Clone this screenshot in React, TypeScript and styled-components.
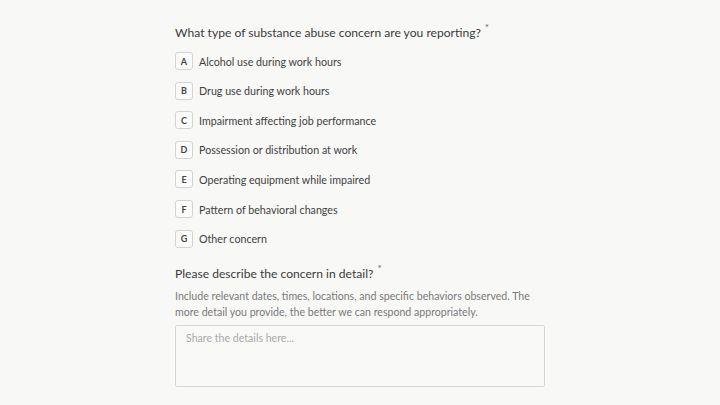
import React from "react";
import styled, { createGlobalStyle } from "styled-components";

const Global = createGlobalStyle`
  html, body { margin: 0; padding: 0; background: #f8f8f7; }
  body { font-family: Lato, "Noto Sans", sans-serif; -webkit-font-smoothing: antialiased; }
  #root { height: 405px; overflow: hidden; }
`;

const Page = styled.div`
  display: flex;
  justify-content: center;
  padding-top: 18px;
  height: 405px;
  box-sizing: border-box;
  overflow: hidden;
`;

const Column = styled.div`
  width: 370px;
  display: flex;
  flex-direction: column;
`;

const Question = styled.section<{ $gap?: number }>`
  display: flex;
  flex-direction: column;
  margin-bottom: ${(p) => p.$gap ?? 0}px;
`;

const Label = styled.h2`
  margin: 0;
  font-size: 12.1px;
  line-height: 20px;
  font-weight: 400;
  color: #3a3a3a;
`;

const Star = styled.sup`
  font-size: 10px;
  margin-left: 4px;
  color: #666;
  position: relative;
  top: -1px;
`;

const Options = styled.div`
  display: flex;
  flex-direction: column;
  gap: 11.6px;
  margin-top: 9px;
`;

const Option = styled.label`
  display: flex;
  align-items: center;
  gap: 6px;
  cursor: pointer;
`;

const Key = styled.span`
  width: 18px;
  height: 18px;
  box-sizing: border-box;
  border: 1px solid #d3d3d2;
  border-radius: 3px;
  background: #fcfcfc;
  display: flex;
  align-items: center;
  justify-content: center;
  font-size: 9px;
  font-weight: 700;
  color: #444;
`;

const OptionText = styled.span`
  font-size: 10.7px;
  color: #3f3f3f;
`;

const Help = styled.p`
  margin: 4px 0 0;
  font-size: 10.6px;
  line-height: 16px;
  color: #7a7a7a;
`;

const TextArea = styled.textarea`
  margin-top: 5px;
  width: 370px;
  height: 62px;
  box-sizing: border-box;
  border: 1px solid #d4d4d3;
  border-radius: 2px;
  background: #f9f9f8;
  padding: 6px 10px;
  font-family: inherit;
  font-size: 10.6px;
  color: #444;
  resize: none;
  outline: none;
  &::placeholder { color: #a8a8a8; }
`;

const options = [
  "Alcohol use during work hours",
  "Drug use during work hours",
  "Impairment affecting job performance",
  "Possession or distribution at work",
  "Operating equipment while impaired",
  "Pattern of behavioral changes",
  "Other concern",
];

export default function App() {
  return (
    <>
      <Global />
      <Page>
        <Column>
          <Question $gap={11}>
            <Label>
              What type of substance abuse concern are you reporting?<Star>*</Star>
            </Label>
            <Options>
              {options.map((o, i) => (
                <Option key={o}>
                  <Key>{String.fromCharCode(65 + i)}</Key>
                  <OptionText>{o}</OptionText>
                </Option>
              ))}
            </Options>
          </Question>
          <Question $gap={14}>
            <Label>
              Please describe the concern in detail?<Star>*</Star>
            </Label>
            <Help>
              Include relevant dates, times, locations, and specific behaviors observed. The
              more detail you provide, the better we can respond appropriately.
            </Help>
            <TextArea placeholder="Share the details here..." />
          </Question>
          <Question>
            <Label>
              How long have you been observing this behavior?<Star>*</Star>
            </Label>
          </Question>
        </Column>
      </Page>
    </>
  );
}
